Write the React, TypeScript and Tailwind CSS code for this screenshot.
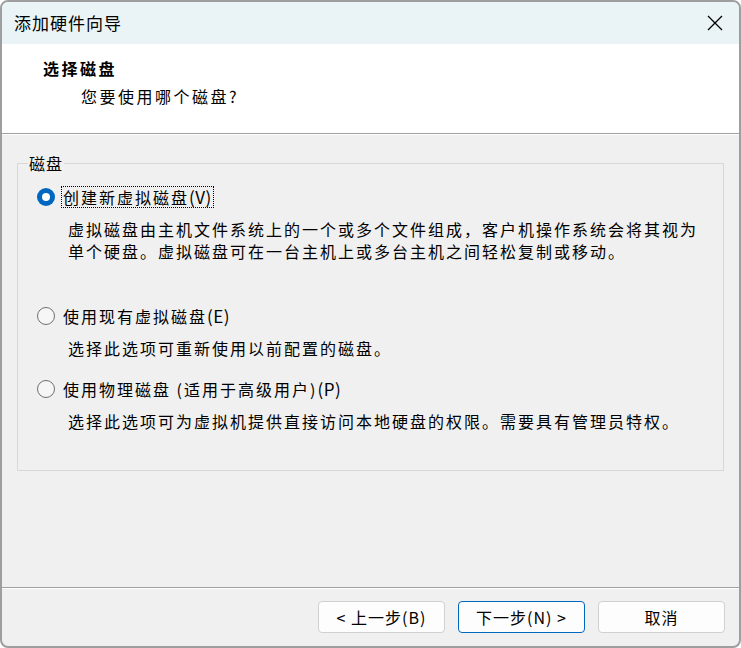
import React from "react";

const font = "font-['Noto_Sans_CJK_SC',sans-serif]";

function Radio({ checked }: { checked?: boolean }) {
  if (checked) {
    return (
      <span className="flex h-[18px] w-[18px] shrink-0 items-center justify-center rounded-full bg-[#0067c0]">
        <span className="h-[8px] w-[8px] rounded-full bg-white" />
      </span>
    );
  }
  return (
    <span className="h-[18px] w-[18px] shrink-0 rounded-full border border-[#6f6f6f] bg-[#f6f6f6]" />
  );
}

function Option({
  label,
  hotkey,
  desc,
  checked,
  className,
}: {
  label: string;
  hotkey: string;
  desc: string[];
  checked?: boolean;
  className?: string;
}) {
  return (
    <div className={className}>
      <div className="flex h-[22px] items-center gap-[8px]">
        <Radio checked={checked} />
        <span
          className={
            checked
              ? "-ml-[2px] border border-dotted border-black px-[1px] leading-[20px]"
              : "leading-[22px]"
          }
        >
          {label}
          <span className="text-[17px] tracking-[0.5px]">{hotkey}</span>
        </span>
      </div>
      <div className="mt-[10px] whitespace-nowrap pl-[31px] leading-[22px]">
        {desc.map((d) => (
          <p key={d}>{d}</p>
        ))}
      </div>
    </div>
  );
}

function Button({ children, primary }: { children: React.ReactNode; primary?: boolean }) {
  return (
    <button
      type="button"
      className={
        "h-[32px] w-[127px] rounded-[4px] bg-[#fdfdfd] text-[16px] tracking-[1px] text-black " +
        (primary ? "border border-[#0067c0]" : "border border-[#d0d0d0]")
      }
    >
      {children}
    </button>
  );
}

export default function App() {
  return (
    <div className="h-[648px] w-[741px] bg-white">
      <div
        className={
          "flex h-full w-full flex-col overflow-hidden rounded-[8px] border-2 border-[#9e9e9e] bg-[#f0f0f0] text-black " +
          font
        }
      >
        {/* title bar */}
        <div className="flex h-[42px] shrink-0 items-center justify-between bg-[#eaf4f7] pl-[12px] pr-[16px]">
          <span className="text-[17px] tracking-[1px] leading-[22px]">添加硬件向导</span>
          <svg width="16" height="16" viewBox="0 0 16 16" className="text-black">
            <path d="M1 1 L15 15 M15 1 L1 15" stroke="currentColor" strokeWidth="1.3" fill="none" />
          </svg>
        </div>

        {/* header */}
        <div className="h-[89px] shrink-0 bg-white pl-[41px] pt-[13px] text-[16px] tracking-[2.5px]">
          <p className="font-bold leading-[22px]">选择磁盘</p>
          <p className="mt-[6px] pl-[38px] leading-[22px]">您要使用哪个磁盘?</p>
        </div>
        <div className="h-px shrink-0 bg-[#a0a0a0]" />
        <div className="h-px shrink-0 bg-white" />

        {/* body */}
        <div className="flex-1 text-[16px] tracking-[2px]">
          <fieldset className="mx-[15px] mt-[17px] border border-[#d8d8d8] pb-[38px] pl-[19px] pr-[10px]">
            <legend className="-ml-[9px] px-[1px] leading-[22px] tracking-[1px]">磁盘</legend>
            <Option
              className="mt-[12px]"
              checked
              label="创建新虚拟磁盘"
              hotkey="(V)"
              desc={[
                "虚拟磁盘由主机文件系统上的一个或多个文件组成，客户机操作系统会将其视为",
                "单个硬盘。虚拟磁盘可在一台主机上或多台主机之间轻松复制或移动。",
              ]}
            />
            <Option
              className="mt-[43px]"
              label="使用现有虚拟磁盘"
              hotkey="(E)"
              desc={["选择此选项可重新使用以前配置的磁盘。"]}
            />
            <Option
              className="mt-[19px]"
              label="使用物理磁盘 (适用于高级用户)"
              hotkey="(P)"
              desc={["选择此选项可为虚拟机提供直接访问本地硬盘的权限。需要具有管理员特权。"]}
            />
          </fieldset>
        </div>

        {/* footer */}
        <div className="h-px shrink-0 bg-[#a0a0a0]" />
        <div className="h-px shrink-0 bg-white" />
        <div className="flex shrink-0 justify-end gap-[13px] pb-[13px] pr-[14px] pt-[12px]">
          <Button>&lt; 上一步(B)</Button>
          <Button primary>下一步(N) &gt;</Button>
          <Button>取消</Button>
        </div>
      </div>
    </div>
  );
}
